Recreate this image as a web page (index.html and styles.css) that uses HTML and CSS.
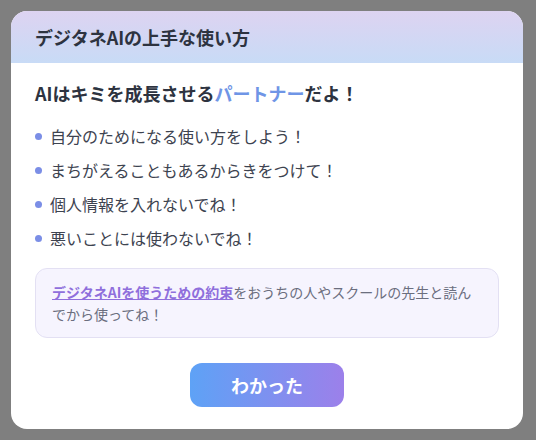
FILE: index.html
```html
<!DOCTYPE html>
<html>

<head>
    <meta charset="utf-8">
    <link rel="stylesheet" href="styles.css">
</head>

<body>
    <div class="modal">
        <div class="modal-header">デジタネAIの上手な使い方</div>
        <div class="modal-body">
            <h3 class="lead">AIはキミを成長させる<span class="accent">パートナー</span>だよ！</h3>
            <ul class="tips">
                <li>自分のためになる使い方をしよう！</li>
                <li>まちがえることもあるからきをつけて！</li>
                <li>個人情報を入れないでね！</li>
                <li>悪いことには使わないでね！</li>
            </ul>
            <div class="note">
                <a href="#" class="note-link">デジタネAIを使うための約束</a>をおうちの人やスクールの先生と読んでから使ってね！
            </div>
            <div class="actions">
                <button class="ok">わかった</button>
            </div>
        </div>
    </div>
</body>

</html>
```

FILE: styles.css
```css
html {
    background: #7f7f7f;
    font-family: "Noto Sans CJK JP", "Noto Sans", sans-serif;
}

body {
    margin: 0;
    padding-right: 2px;
    min-height: 100vh;
    display: flex;
    align-items: center;
    justify-content: center;
}

.modal {
    width: 512px;
    background: #ffffff;
    border-radius: 16px;
    overflow: hidden;
}

.modal-header {
    height: 52px;
    display: flex;
    align-items: center;
    padding: 0 24px;
    background: linear-gradient(180deg, #ddd3f1, #c8dbf6);
    color: #2d3340;
    font-size: 18px;
    font-weight: bold;
}

.modal-body {
    padding: 18px 24px 22px;
}

.lead {
    margin: 0;
    font-size: 18px;
    line-height: 25px;
    color: #2d3340;
}

.accent {
    color: #6f95e6;
}

.tips {
    list-style: none;
    margin: 18px 0 0;
    padding: 0;
    display: flex;
    flex-direction: column;
    gap: 10px;
}

.tips li {
    display: flex;
    align-items: center;
    gap: 8px;
    font-size: 16px;
    line-height: 24px;
    color: #3d4350;
}

.tips li::before {
    content: "";
    width: 7px;
    height: 7px;
    border-radius: 50%;
    background: #7b8ee6;
    flex-shrink: 0;
}

.note {
    margin-top: 18px;
    padding: 12px 16px;
    background: #f6f4fe;
    border: 1px solid #e3e0f3;
    border-radius: 12px;
    font-size: 14px;
    line-height: 22px;
    color: #6b6e7e;
}

.note-link {
    color: #8f6fdc;
    font-weight: bold;
    text-decoration: underline;
}

.actions {
    display: flex;
    justify-content: center;
    margin-top: 25px;
}

.ok {
    width: 154px;
    height: 44px;
    border: none;
    border-radius: 12px;
    background: linear-gradient(90deg, #5ea2f6, #9c80ea);
    color: #ffffff;
    font-family: inherit;
    font-size: 18px;
    font-weight: bold;
}
```
